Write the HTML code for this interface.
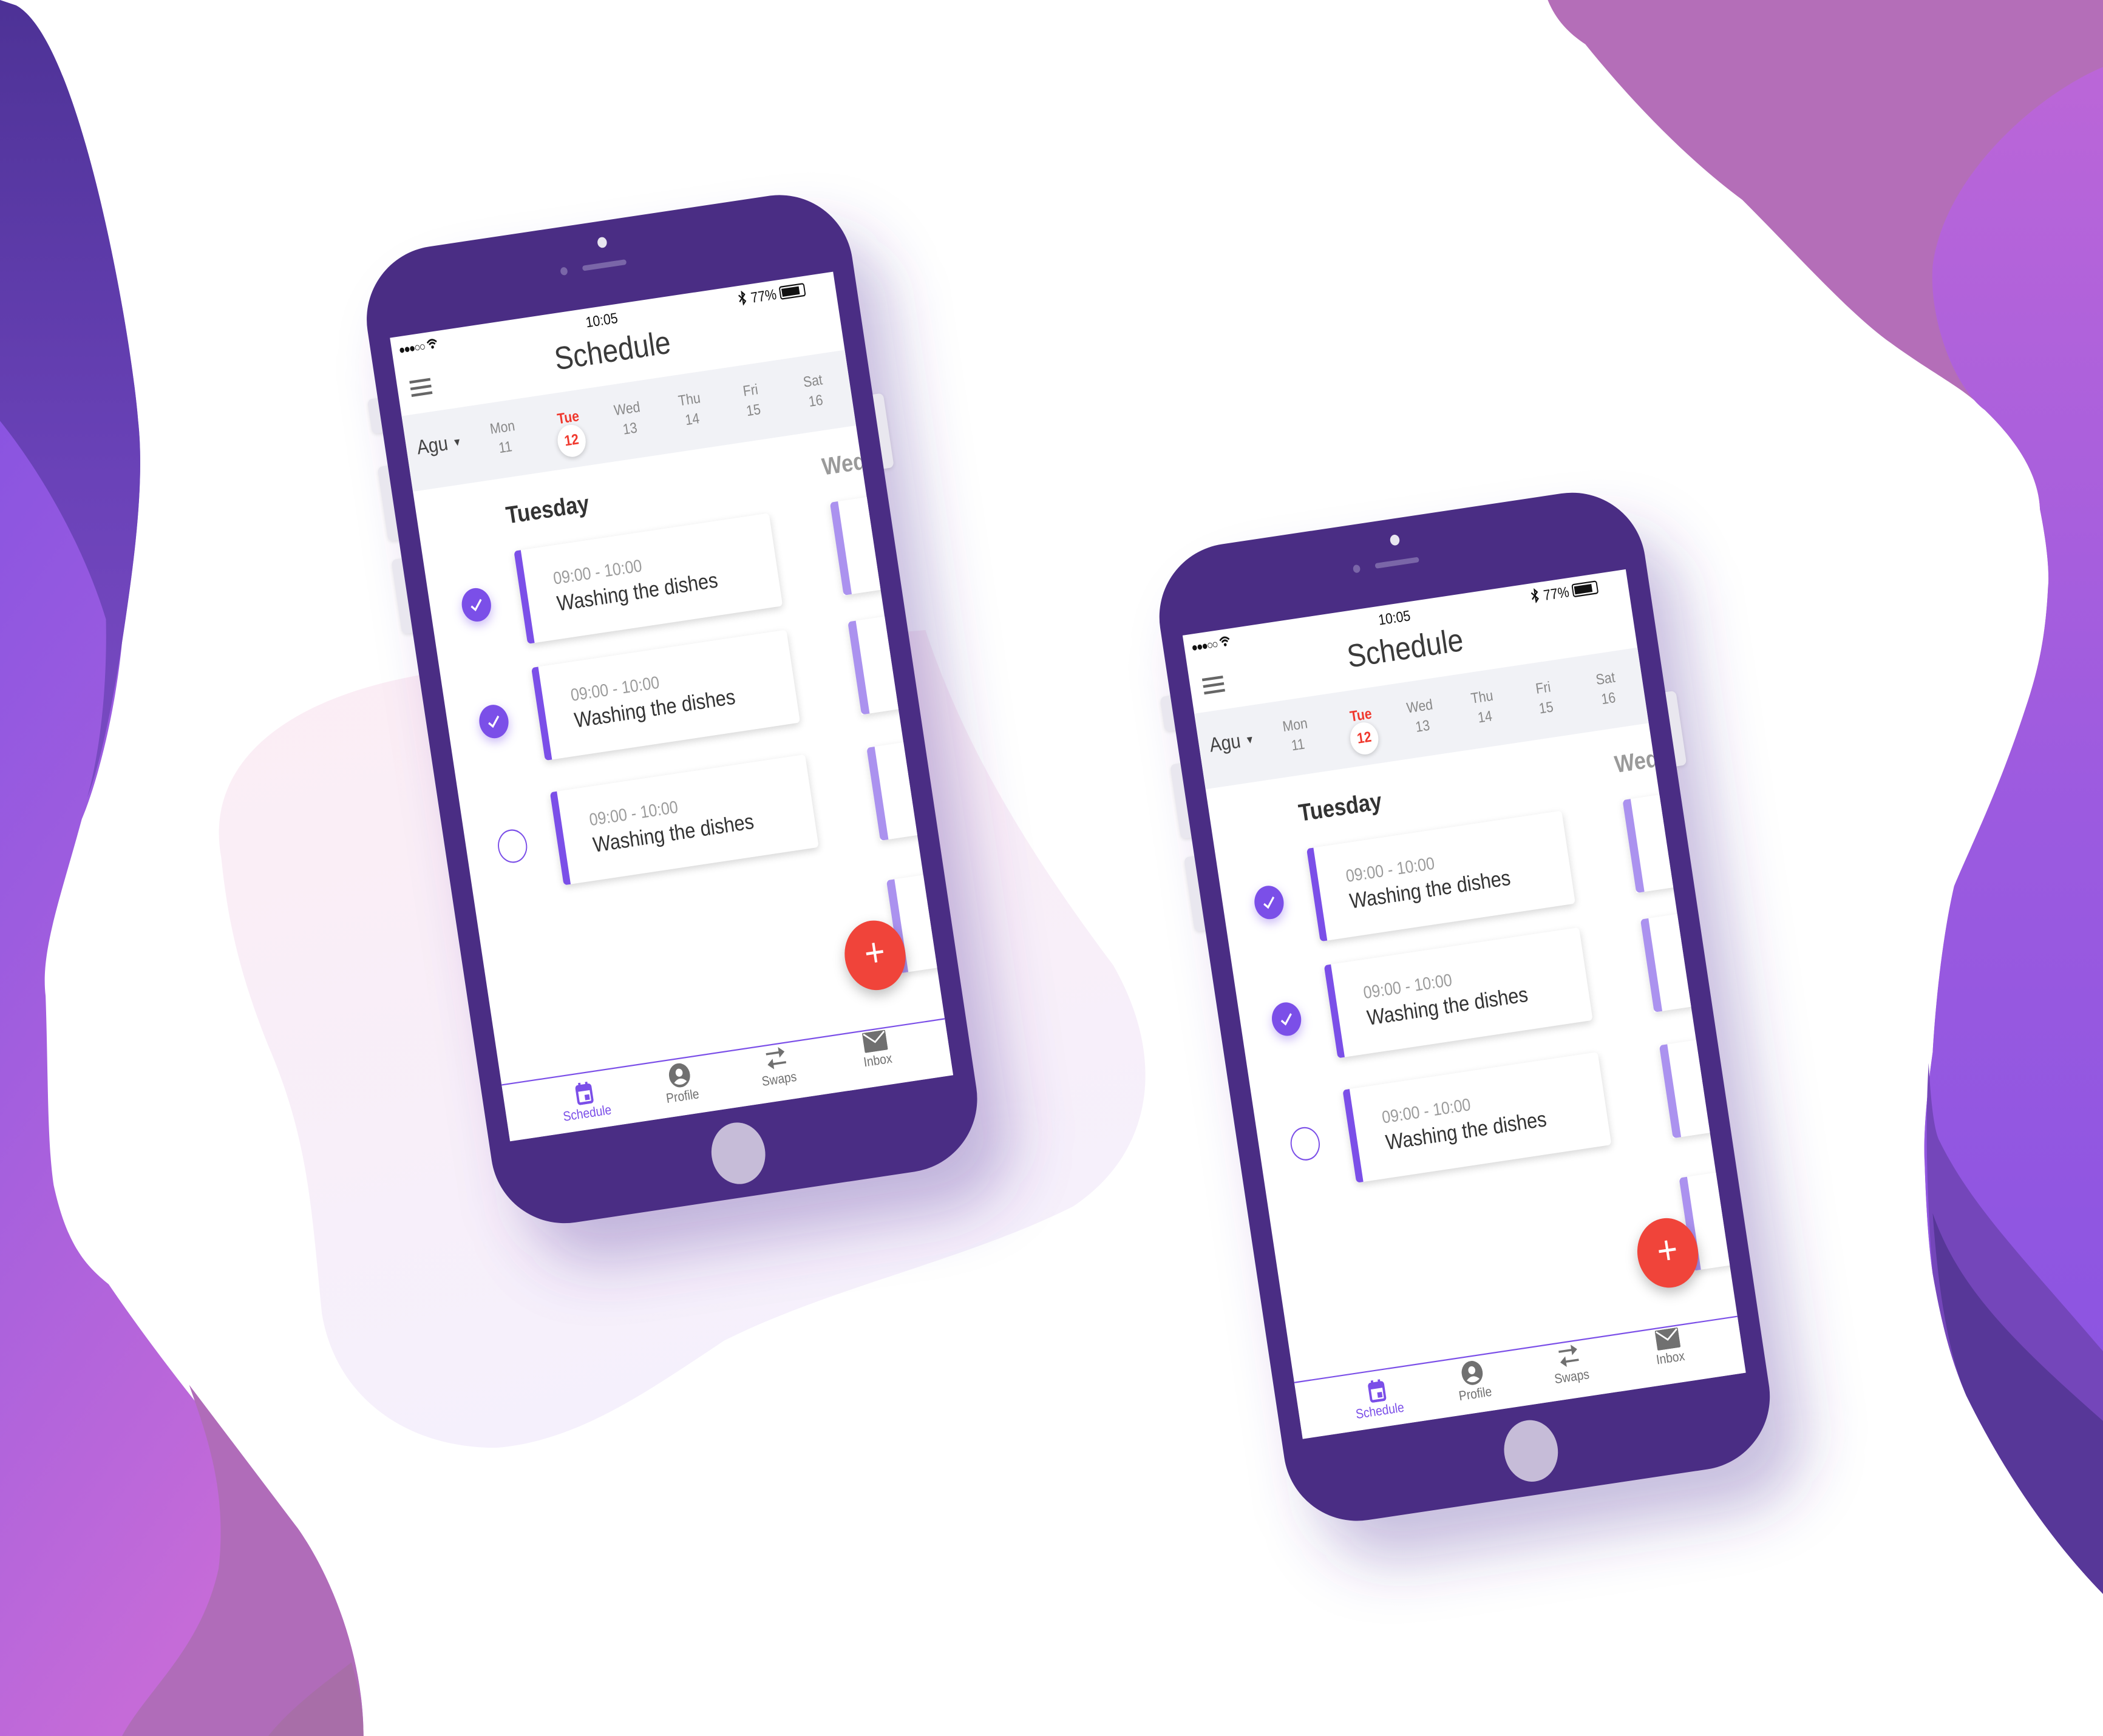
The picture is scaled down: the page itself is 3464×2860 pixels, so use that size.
<!DOCTYPE html>
<html><head><meta charset="utf-8">
<style>
*{box-sizing:border-box;margin:0;padding:0}
html,body{width:3464px;height:2860px;overflow:hidden;background:#fff}
.stage{position:absolute;left:0;top:0;width:1568px;height:1295px;transform:scale(2.2092,2.2085);transform-origin:0 0;font-family:"Liberation Sans",sans-serif}
.pw{position:absolute;width:420px;height:736px;transform:rotate(-8.5deg) scaleX(.87);}
.sb{position:absolute;background:#e9e7ef;border-radius:4px;width:14px;box-shadow:0 1px 3px rgba(0,0,0,.1)}
.phone{position:absolute;left:0;top:0;width:420px;height:736px;border-radius:63px/55px;background:#4a2d84}
.cam{position:absolute;width:8px;height:8px;border-radius:50%;background:#e8e6f0;left:206px;top:12px}
.dot{position:absolute;width:6px;height:6px;border-radius:50%;background:#7a66a8;left:171px;top:30px}
.slit{position:absolute;width:38px;height:4px;border-radius:2px;background:#7a66a8;left:190px;top:31px}
.home{position:absolute;width:46px;height:46px;border-radius:50%;background:#c6bcd8;left:187px;top:680px}
.screen{position:absolute;left:18px;top:63px;width:384px;height:606px;background:#fff;overflow:hidden}
.a{position:absolute;white-space:nowrap}
.band{position:absolute;left:0;top:59px;width:384px;height:57px;background:#f1f2f6}
.day{position:absolute;width:40px;text-align:center;font-size:11px;color:#888;line-height:13px}
.card{position:absolute;left:78px;width:221px;height:70px;background:#fff;border-radius:3px;box-shadow:0 2px 6px rgba(0,0,0,.16)}
.card:before{content:"";position:absolute;left:0;top:0;width:6px;height:70px;background:#7b4fe8;border-radius:3px 0 0 3px}
.card .t{position:absolute;left:30px;top:17px;font-size:13px;color:#9c9c9c}
.card .n{position:absolute;left:30px;top:36px;font-size:16px;color:#333}
.pk{position:absolute;left:352px;width:60px;height:70px;background:#fff;box-shadow:0 2px 6px rgba(0,0,0,.14)}
.pk:before{content:"";position:absolute;left:0;top:0;width:7px;height:70px;background:#ab92ef;border-radius:3px 0 0 3px}
.chk{position:absolute;left:27px;width:25px;height:25px;border-radius:50%;background:#7b4fe8;box-shadow:0 3px 8px rgba(123,79,232,.4)}
.chk svg{position:absolute;left:5px;top:5px}
.chk.o{background:#fff;border:1.3px solid #7b4fe8;box-shadow:none}
.fab{position:absolute;left:307px;top:483px;width:52px;height:52px;border-radius:50%;background:#f0443a;box-shadow:0 4px 10px rgba(0,0,0,.25);color:#fff;font-size:30px;line-height:50px;text-align:center;font-weight:300}
.tab{position:absolute;top:563px;left:0;width:384px;height:43px;border-top:1.5px solid #7b4fe8;background:#fff}
.ti{position:absolute;width:60px;text-align:center;font-size:10px;color:#707070}
.ti svg{display:block;margin:0 auto 2px}
</style></head><body>
<div class="stage">
<svg width="1568" height="1295" style="position:absolute;left:0;top:0">
<defs>
<linearGradient id="gl" x1="0" y1="0" x2="0.3" y2="1"><stop offset="0" stop-color="#7c4ee2"/><stop offset=".5" stop-color="#9c5cdf"/><stop offset="1" stop-color="#c56bd8"/></linearGradient>
<linearGradient id="gd" x1="0" y1="0" x2="0" y2="1"><stop offset="0" stop-color="#4d3296"/><stop offset=".6" stop-color="#6a42b8"/><stop offset="1" stop-color="#7a4bc2"/></linearGradient>
<linearGradient id="gr" x1="0" y1="0" x2="0" y2="1"><stop offset="0" stop-color="#bb66d8"/><stop offset=".5" stop-color="#9b5ae0"/><stop offset="1" stop-color="#8652e2"/></linearGradient>
<linearGradient id="gb" x1="0" y1="0" x2="0.3" y2="1"><stop offset="0" stop-color="#fcedf4"/><stop offset="1" stop-color="#f5f0fc"/></linearGradient>
<filter id="bl" x="-50%" y="-50%" width="200%" height="200%"><feGaussianBlur stdDeviation="22"/></filter>
</defs>
<path d="M165,640 C150,560 230,500 400,495 L690,470 C720,560 770,640 830,720 C870,790 860,860 800,900 C720,940 620,960 540,1000 C480,1040 430,1075 370,1080 C300,1080 250,1040 240,980 C232,900 230,850 200,780 C180,730 170,690 165,640 Z" fill="url(#gb)"/>
<path d="M0,0 L12,4 C60,30 98,250 103,314 C108,360 100,420 91,479 C85,540 70,590 61,611 C45,670 30,710 34,743 C36,800 35,850 40,884 C50,930 65,945 81,958 C130,1030 190,1100 222,1140 C250,1180 271,1240 271,1295 L0,1295 Z" fill="url(#gl)"/>
<path d="M0,0 L12,4 C60,30 98,250 103,314 C108,360 100,420 91,479 C85,520 75,570 65,595 C75,560 80,510 79,462 C60,400 25,345 0,314 Z" fill="url(#gd)"/>
<path d="M141,1033 L222,1140 C250,1180 271,1240 271,1295 L91,1295 C110,1260 150,1230 163,1170 C170,1110 152,1065 141,1033 Z" fill="#b06cb9"/>
<path d="M200,1295 C220,1270 250,1250 262,1240 C268,1260 271,1280 271,1295 Z" fill="#a86ea8"/>
<path d="M1154,0 C1160,15 1170,25 1182,33 C1220,80 1260,120 1299,149 C1340,190 1380,235 1410,256 C1440,278 1465,290 1480,306 C1505,330 1520,355 1521,380 C1527,410 1528,430 1527,438 C1525,480 1518,505 1510,529 C1490,590 1470,630 1457,661 C1448,700 1443,750 1441,785 C1436,820 1434,850 1435,867 C1436,900 1438,930 1441,950 C1448,990 1455,1015 1466,1041 C1495,1100 1530,1150 1568,1189 L1568,0 Z" fill="#b46eb8"/>
<path d="M1568,50 C1520,70 1450,130 1441,198 C1438,240 1458,290 1480,306 C1505,330 1520,355 1521,380 C1527,410 1528,430 1527,438 C1525,480 1518,505 1510,529 C1490,590 1470,630 1457,661 C1448,700 1443,750 1441,785 C1436,820 1434,850 1435,867 C1436,900 1438,930 1441,950 C1448,990 1455,1015 1466,1041 C1495,1100 1530,1150 1568,1189 Z" fill="url(#gr)"/>
<path d="M1438,793 C1440,830 1443,845 1446,851 C1470,900 1510,940 1568,1008 L1568,1189 C1530,1150 1495,1100 1466,1041 C1455,1015 1448,990 1441,950 C1437,900 1435,840 1438,793 Z" fill="#7446ba"/>
<path d="M1441,905 C1460,960 1500,1000 1568,1060 L1568,1189 C1530,1150 1495,1100 1466,1041 C1455,1015 1446,975 1441,905 Z" fill="#573798"/>
<!-- phone shadows -->
<rect x="343" y="191" width="366" height="736" rx="55" fill="rgba(85,55,155,0.32)" filter="url(#bl)" transform="rotate(-8.5 526 559)"/>
<rect x="934" y="413" width="366" height="736" rx="55" fill="rgba(85,55,155,0.32)" filter="url(#bl)" transform="rotate(-8.5 1117 781)"/>
</svg>

<!-- PHONE 1 -->
<div class="pw" style="left:291px;top:161px">
<div class="sb" style="left:-9px;top:106px;height:26px"></div>
<div class="sb" style="left:-9px;top:157px;height:56px"></div>
<div class="sb" style="left:-9px;top:227px;height:56px"></div>
<div class="sb" style="left:415px;top:158px;height:56px"></div>
<div class="phone">
<div class="cam"></div><div class="dot"></div><div class="slit"></div>
<div class="screen">
 <div class="a" style="left:6px;top:5px;font-size:9px;color:#111;letter-spacing:-1px">●●●○○ <svg width="10" height="8" viewBox="0 0 10 8" style="vertical-align:0"><path d="M1,3 Q5,-1 9,3 M2.5,4.5 Q5,2 7.5,4.5" stroke="#111" stroke-width="1.3" fill="none"/><circle cx="5" cy="6.5" r="1.2" fill="#111"/></svg></div>
 <div class="a" style="left:168px;top:5px;font-size:11px;color:#111">10:05</div>
 <div class="a" style="left:300px;top:4px;font-size:11px;color:#111"><svg width="8" height="11" viewBox="0 0 8 11" style="vertical-align:-1px"><path d="M1,3 L6,8 L4,10 L4,1 L6,3 L1,8" stroke="#111" stroke-width="1.1" fill="none"/></svg> 77% <span style="display:inline-block;width:22px;height:10px;border:1px solid #111;border-radius:2px;vertical-align:-1px;position:relative"><span style="position:absolute;left:1px;top:1px;width:15px;height:6px;background:#111"></span></span></div>
 <div class="a" style="left:137px;top:21px;font-size:24px;color:#3a3a3a">Schedule</div>
 <div class="a" style="left:11px;top:34px;width:18px;height:12px;border-top:2px solid #666;border-bottom:2px solid #666"><div style="margin-top:3px;height:2px;background:#666"></div></div>
 <div class="band"></div>
 <div class="a" style="left:9px;top:76px;font-size:15px;color:#444">Agu <span style="font-size:8px;vertical-align:2px">▼</span></div>
 <div class="day" style="left:64px;top:73px">Mon<br><span style="line-height:17px">11</span></div>
 <div class="day" style="left:121px;top:73px;color:#f0382d;font-weight:bold">Tue</div>
 <div class="a" style="left:129px;top:84px;width:24px;height:24px;border-radius:50%;background:#fff;box-shadow:0 1px 4px rgba(0,0,0,.2);color:#f0382d;font-size:11px;font-weight:bold;text-align:center;line-height:24px">12</div>
 <div class="day" style="left:172px;top:73px">Wed<br><span style="line-height:17px">13</span></div>
 <div class="day" style="left:226px;top:73px">Thu<br><span style="line-height:17px">14</span></div>
 <div class="day" style="left:279px;top:73px">Fri<br><span style="line-height:17px">15</span></div>
 <div class="day" style="left:333px;top:73px">Sat<br><span style="line-height:17px">16</span></div>
 <div class="a" style="left:76px;top:134px;font-size:18px;font-weight:bold;color:#333">Tuesday</div>
 <div class="a" style="left:350px;top:133px;font-size:18px;font-weight:bold;color:#9a9a9a">Wed</div>
 <div class="pk" style="top:170px"></div><div class="pk" style="top:260px"></div><div class="pk" style="top:355px"></div><div class="pk" style="top:455px"></div>
 <div class="card" style="top:171px"><div class="t">09:00 - 10:00</div><div class="n">Washing the dishes</div></div>
 <div class="card" style="top:259px"><div class="t">09:00 - 10:00</div><div class="n">Washing the dishes</div></div>
 <div class="card" style="top:353px"><div class="t">09:00 - 10:00</div><div class="n">Washing the dishes</div></div>
 <div class="chk" style="top:194px"><svg width="15" height="15" viewBox="0 0 15 15"><path d="M3,8 L6,11 L12,4" stroke="#fff" stroke-width="1.6" fill="none"/></svg></div>
 <div class="chk" style="top:282px"><svg width="15" height="15" viewBox="0 0 15 15"><path d="M3,8 L6,11 L12,4" stroke="#fff" stroke-width="1.6" fill="none"/></svg></div>
 <div class="chk o" style="top:376px"></div>
 <div class="fab">+</div>
 <div class="tab">
  <div class="ti" style="left:39px;top:6px;color:#7b4fe8"><svg width="16" height="17" viewBox="0 0 16 17"><rect x="2" y="3" width="12" height="13" rx="1.5" fill="none" stroke="#7b4fe8" stroke-width="2"/><rect x="2" y="3" width="12" height="4" fill="#7b4fe8"/><rect x="4" y="0.5" width="2" height="4" fill="#7b4fe8"/><rect x="10" y="0.5" width="2" height="4" fill="#7b4fe8"/><rect x="8" y="10" width="4" height="4" fill="#7b4fe8"/></svg>Schedule</div>
  <div class="ti" style="left:122px;top:3px"><svg width="18" height="18" viewBox="0 0 18 18"><circle cx="9" cy="9" r="9" fill="#707070"/><circle cx="9" cy="7" r="3" fill="#fff"/><path d="M3.5,14 Q9,9 14.5,14 Q9,18 3.5,14Z" fill="#fff"/></svg>Profile</div>
  <div class="ti" style="left:206px;top:1px"><svg width="20" height="18" viewBox="0 0 20 18"><path d="M2,5 L14,5" stroke="#707070" stroke-width="1.6"/><path d="M13,1 L18,5 L13,9Z" fill="#707070"/><path d="M6,13 L18,13" stroke="#707070" stroke-width="1.6"/><path d="M7,9 L2,13 L7,17Z" fill="#707070"/></svg>Swaps</div>
  <div class="ti" style="left:292px;top:1px"><svg width="20" height="15" viewBox="0 0 20 15"><rect x="0" y="0" width="20" height="15" rx="1" fill="#707070"/><path d="M1,1 L10,8 L19,1" stroke="#fff" stroke-width="1.3" fill="none"/></svg>Inbox</div>
 </div>
</div>
<div class="home"></div>
</div>
</div>

<!-- PHONE 2 -->
<div class="pw" style="left:882px;top:383px">
<div class="sb" style="left:-9px;top:106px;height:26px"></div>
<div class="sb" style="left:-9px;top:157px;height:56px"></div>
<div class="sb" style="left:-9px;top:227px;height:56px"></div>
<div class="sb" style="left:415px;top:158px;height:56px"></div>
<div class="phone">
<div class="cam"></div><div class="dot"></div><div class="slit"></div>
<div class="screen">
 <div class="a" style="left:6px;top:5px;font-size:9px;color:#111;letter-spacing:-1px">●●●○○ <svg width="10" height="8" viewBox="0 0 10 8" style="vertical-align:0"><path d="M1,3 Q5,-1 9,3 M2.5,4.5 Q5,2 7.5,4.5" stroke="#111" stroke-width="1.3" fill="none"/><circle cx="5" cy="6.5" r="1.2" fill="#111"/></svg></div>
 <div class="a" style="left:168px;top:5px;font-size:11px;color:#111">10:05</div>
 <div class="a" style="left:300px;top:4px;font-size:11px;color:#111"><svg width="8" height="11" viewBox="0 0 8 11" style="vertical-align:-1px"><path d="M1,3 L6,8 L4,10 L4,1 L6,3 L1,8" stroke="#111" stroke-width="1.1" fill="none"/></svg> 77% <span style="display:inline-block;width:22px;height:10px;border:1px solid #111;border-radius:2px;vertical-align:-1px;position:relative"><span style="position:absolute;left:1px;top:1px;width:15px;height:6px;background:#111"></span></span></div>
 <div class="a" style="left:137px;top:21px;font-size:24px;color:#3a3a3a">Schedule</div>
 <div class="a" style="left:11px;top:34px;width:18px;height:12px;border-top:2px solid #666;border-bottom:2px solid #666"><div style="margin-top:3px;height:2px;background:#666"></div></div>
 <div class="band"></div>
 <div class="a" style="left:9px;top:76px;font-size:15px;color:#444">Agu <span style="font-size:8px;vertical-align:2px">▼</span></div>
 <div class="day" style="left:64px;top:73px">Mon<br><span style="line-height:17px">11</span></div>
 <div class="day" style="left:121px;top:73px;color:#f0382d;font-weight:bold">Tue</div>
 <div class="a" style="left:129px;top:84px;width:24px;height:24px;border-radius:50%;background:#fff;box-shadow:0 1px 4px rgba(0,0,0,.2);color:#f0382d;font-size:11px;font-weight:bold;text-align:center;line-height:24px">12</div>
 <div class="day" style="left:172px;top:73px">Wed<br><span style="line-height:17px">13</span></div>
 <div class="day" style="left:226px;top:73px">Thu<br><span style="line-height:17px">14</span></div>
 <div class="day" style="left:279px;top:73px">Fri<br><span style="line-height:17px">15</span></div>
 <div class="day" style="left:333px;top:73px">Sat<br><span style="line-height:17px">16</span></div>
 <div class="a" style="left:76px;top:134px;font-size:18px;font-weight:bold;color:#333">Tuesday</div>
 <div class="a" style="left:350px;top:133px;font-size:18px;font-weight:bold;color:#9a9a9a">Wed</div>
 <div class="pk" style="top:170px"></div><div class="pk" style="top:260px"></div><div class="pk" style="top:355px"></div><div class="pk" style="top:455px"></div>
 <div class="card" style="top:171px"><div class="t">09:00 - 10:00</div><div class="n">Washing the dishes</div></div>
 <div class="card" style="top:259px"><div class="t">09:00 - 10:00</div><div class="n">Washing the dishes</div></div>
 <div class="card" style="top:353px"><div class="t">09:00 - 10:00</div><div class="n">Washing the dishes</div></div>
 <div class="chk" style="top:194px"><svg width="15" height="15" viewBox="0 0 15 15"><path d="M3,8 L6,11 L12,4" stroke="#fff" stroke-width="1.6" fill="none"/></svg></div>
 <div class="chk" style="top:282px"><svg width="15" height="15" viewBox="0 0 15 15"><path d="M3,8 L6,11 L12,4" stroke="#fff" stroke-width="1.6" fill="none"/></svg></div>
 <div class="chk o" style="top:376px"></div>
 <div class="fab">+</div>
 <div class="tab">
  <div class="ti" style="left:39px;top:6px;color:#7b4fe8"><svg width="16" height="17" viewBox="0 0 16 17"><rect x="2" y="3" width="12" height="13" rx="1.5" fill="none" stroke="#7b4fe8" stroke-width="2"/><rect x="2" y="3" width="12" height="4" fill="#7b4fe8"/><rect x="4" y="0.5" width="2" height="4" fill="#7b4fe8"/><rect x="10" y="0.5" width="2" height="4" fill="#7b4fe8"/><rect x="8" y="10" width="4" height="4" fill="#7b4fe8"/></svg>Schedule</div>
  <div class="ti" style="left:122px;top:3px"><svg width="18" height="18" viewBox="0 0 18 18"><circle cx="9" cy="9" r="9" fill="#707070"/><circle cx="9" cy="7" r="3" fill="#fff"/><path d="M3.5,14 Q9,9 14.5,14 Q9,18 3.5,14Z" fill="#fff"/></svg>Profile</div>
  <div class="ti" style="left:206px;top:1px"><svg width="20" height="18" viewBox="0 0 20 18"><path d="M2,5 L14,5" stroke="#707070" stroke-width="1.6"/><path d="M13,1 L18,5 L13,9Z" fill="#707070"/><path d="M6,13 L18,13" stroke="#707070" stroke-width="1.6"/><path d="M7,9 L2,13 L7,17Z" fill="#707070"/></svg>Swaps</div>
  <div class="ti" style="left:292px;top:1px"><svg width="20" height="15" viewBox="0 0 20 15"><rect x="0" y="0" width="20" height="15" rx="1" fill="#707070"/><path d="M1,1 L10,8 L19,1" stroke="#fff" stroke-width="1.3" fill="none"/></svg>Inbox</div>
 </div>
</div>
<div class="home"></div>
</div>
</div>
</div>
</body></html>
